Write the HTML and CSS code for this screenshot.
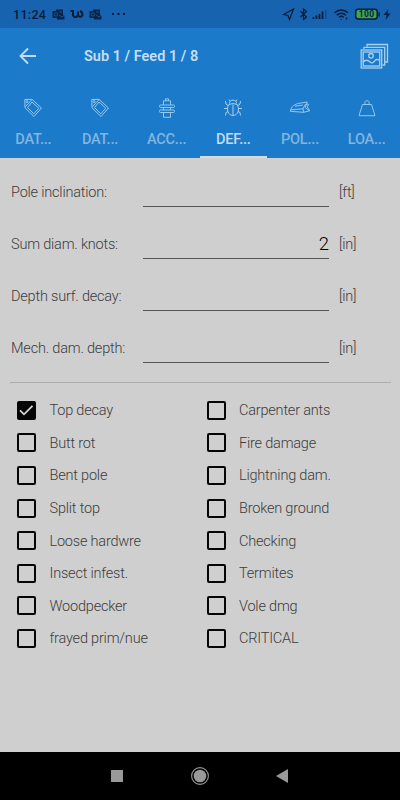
FILE: index.html
```html
<!DOCTYPE html>
<html lang="en">
<head>
<meta charset="utf-8">
<title>Sub 1 / Feed 1 / 8</title>
<link rel="stylesheet" href="styles.css">
</head>
<body>
<svg class="defs" aria-hidden="true">
  <symbol id="tag" viewBox="0 0 20 20"><path d="M1.800 1.500 9 1.300 18.500 10 11 18.500 2 9.800Z M9 4 15.800 10.200 10.800 15.800 4.500 9.500Z M2.500 8.500 8.600 2"/><circle cx="4" cy="3.600" r="1"/></symbol>
  <symbol id="mail" viewBox="0 0 13 11"><path class="solid" d="M4 .5h7v5l1.500 1v4H5V9H.5V2H4Z"/><circle class="cut" cx="4" cy="5.500" r="1.700"/><path class="cut" d="M7 6l2.800 2L13 5.800M7 3h3"/></symbol>
</svg>
<div class="screen">
  <div class="status">
    <span class="clock">11:24</span>
    <svg class="mail" width="13" height="11"><use href="#mail"/></svg>
    <svg class="wave" width="14" height="10" viewBox="0 0 14 10"><path d="M.5 2H3v3.500C3 9 8 9 8 5V2.500 5c0 4 4.700 3.500 4.500.3C12.400 3.500 11.500 2.500 10 2"/></svg>
    <svg class="mail" width="13" height="11"><use href="#mail"/></svg>
    <svg class="dots" width="15" height="4" viewBox="0 0 15 4"><path d="M1 1h2v2H1zM6.500 1h2v2h-2zM12 1h2v2h-2z"/></svg>
    <svg class="system" width="110" height="18" viewBox="0 0 110 18">
      <path d="M1.500 9.500 11.500 4 7.500 14.500 6 10.500Z"/>
      <path d="M18.500 6.200 24.500 12 21.500 14.500V4L24.500 6.500 18.500 12"/>
      <path class="bars" d="M31.500 14v-2M34.500 14v-3.500M37.500 14V9M40.500 14V6.500"/><path class="faint" d="M43.800 14V4.500"/>
      <path class="wifi" d="M52.500 7.700c4-3.600 9.500-3.600 13.500 0M54.700 10.100c3-2.400 6.200-2.400 9.200 0M57 12.300c1.500-1.300 3.200-1.300 4.700 0M59.300 14v.8M64.500 12.500v2"/>
      <rect class="battery" x="73.700" y="4.300" width="21.500" height="9.800" rx="2.500"/><path class="tip" d="M97.200 7.500v4"/>
      <text x="84.600" y="12.200">100</text>
      <path class="solid" d="M106.500 4 101.500 10h3l-1 5 5.200-6.500h-3.200Z"/>
    </svg>
  </div>
  <header>
    <div class="titlebar">
      <svg class="back" width="18" height="18" viewBox="0 0 18 18"><path d="M17 9H2M9 1.500 1.500 9 9 16.500"/></svg>
      <h1>Sub 1 / Feed 1 / 8</h1>
      <svg class="gallery" width="30" height="28" viewBox="0 0 30 28"><path d="M7 3.500V1.500H27.500V19H25M4 6V4.300H24.700V22H22.500"/><rect x="1.200" y="7" width="20.500" height="18"/><rect class="frame" x="3.200" y="9" width="16.500" height="14"/><circle cx="11" cy="12.800" r="2.300"/><path d="M3 19c3-3 5-2 7 0s4 0 5-1.300 3-1.500 5-.5"/></svg>
    </div>
    <nav>
      <a class="tab"><svg viewBox="0 0 20 20"><use href="#tag"/></svg><span>DAT...</span></a>
      <a class="tab"><svg viewBox="0 0 20 20"><use href="#tag"/></svg><span>DAT...</span></a>
      <a class="tab"><svg viewBox="0 0 20 20"><path d="M8.500 2.500V.8h3v1.700M6.500 7V2.800h7V7M6.500 9.500V12M13.500 9.500V12M6.500 14.500v4.800h7v-4.800"/><rect x="2.500" y="7" width="15" height="2.500" rx="1"/><rect x="2.500" y="12" width="15" height="2.500" rx="1"/></svg><span>ACC...</span></a>
      <a class="tab active"><svg viewBox="0 0 20 20"><path d="M6.500 5.500C6 1 14 1 13.500 5.500M10 6.500v11M5.800 6.500Q10 4.500 14.200 6.500M5.800 6.500C3 11 5 17.500 10 17.500S17 11 14.200 6.500M7 3 6 1.500M13 3 14 1.500M5 7.500 3 6 2.500 3M15 7.500 17 6 17.500 3M4.500 10.500H1M15.500 10.500H19M5 13.500 3 14.500 2.500 17.500M15 13.500 17 14.500 17.500 17.500"/></svg><span>DEF...</span></a>
      <a class="tab"><svg viewBox="0 0 20 20"><path d="M.3 13.300C1 8.500 5 6 9 5.300L17.300 4 16.500 6l2 .3-1.200 2.500 2.400 4-6.200 1.500ZM1 11.800 13 10.800 15.500 6M5 8.200 13 7M13 10.800l.5 3.500M16.500 6l-1.200 3.500 3.500 3"/></svg><span>POL...</span></a>
      <a class="tab"><svg viewBox="0 0 20 20"><path d="M5.500 6.500h9L18 17.700H2ZM8.200 6.300C6 1.500 14 1.500 11.800 6.300"/></svg><span>LOA...</span></a>
    </nav>
  </header>
  <main>
    <form>
      <div class="field"><label>Pole inclination:</label><div class="value"></div><span>[ft]</span></div>
      <div class="field"><label>Sum diam. knots:</label><div class="value">2</div><span>[in]</span></div>
      <div class="field"><label>Depth surf. decay:</label><div class="value"></div><span>[in]</span></div>
      <div class="field"><label>Mech. dam. depth:</label><div class="value"></div><span>[in]</span></div>
    </form>
    <div class="checks">
      <div class="check"><i class="box on"><svg viewBox="0 0 18 18"><path d="M3 9.300 7 13.300 15.500 4.800"/></svg></i><span>Top decay</span></div>
      <div class="check"><i class="box"></i><span>Carpenter ants</span></div>
      <div class="check"><i class="box"></i><span>Butt rot</span></div>
      <div class="check"><i class="box"></i><span>Fire damage</span></div>
      <div class="check"><i class="box"></i><span>Bent pole</span></div>
      <div class="check"><i class="box"></i><span>Lightning dam.</span></div>
      <div class="check"><i class="box"></i><span>Split top</span></div>
      <div class="check"><i class="box"></i><span>Broken ground</span></div>
      <div class="check"><i class="box"></i><span>Loose hardwre</span></div>
      <div class="check"><i class="box"></i><span>Checking</span></div>
      <div class="check"><i class="box"></i><span>Insect infest.</span></div>
      <div class="check"><i class="box"></i><span>Termites</span></div>
      <div class="check"><i class="box"></i><span>Woodpecker</span></div>
      <div class="check"><i class="box"></i><span>Vole dmg</span></div>
      <div class="check"><i class="box"></i><span>frayed prim/nue</span></div>
      <div class="check"><i class="box"></i><span>CRITICAL</span></div>
    </div>
  </main>
  <footer>
    <svg width="20" height="20" viewBox="0 0 20 20"><path d="M4 4h12v12H4z"/></svg>
    <svg width="20" height="20" viewBox="0 0 20 20"><circle cx="10" cy="10" r="6.300"/><circle class="ring" cx="10" cy="10" r="8.400"/></svg>
    <svg width="20" height="20" viewBox="0 0 20 20"><path d="M3 10 15 3v14Z"/></svg>
  </footer>
</div>
</body>
</html>
```
FILE: styles.css
```css
* { box-sizing: border-box; }
body { margin: 0; font-family: Roboto, sans-serif; }
svg { display: block; fill: none; }
.defs { display: none; }
.screen { width: 400px; height: 800px; display: flex; flex-direction: column; background: #cfcfcf; overflow: hidden; }

.status { height: 28px; background: #1763b0; display: flex; align-items: center; padding: 0 8px 0 13px; color: #061c3a; }
.clock { font-size: 12.500px; font-weight: 500; letter-spacing: .3px; width: 39px; }
.status svg { stroke: #061c3a; flex: none; }
.status .mail { stroke: #1763b0; }
.solid { fill: #082448; stroke: none; }
.cut { stroke-width: .8; }
.status .wave { margin: 0 5px; stroke-width: 2; }
.status .dots { margin-left: 9px; fill: #061c3a; stroke: none; }
.status .system { margin-left: auto; stroke-width: 1.200; }
.bars { stroke-width: 1.700; }
.faint { stroke: #104d90; stroke-width: 1.500; }
.wifi { stroke-width: 1.500; }
.battery { fill: #42a44c; stroke-width: 1.500; }
.tip { stroke-width: 1.500; }
.system text { font: 700 8.500px Roboto, sans-serif; fill: #082448; stroke: none; text-anchor: middle; letter-spacing: .4px; }

header { height: 130px; background: #1b7bca; flex: none; }
.titlebar { height: 56px; display: flex; align-items: center; padding: 0 10px 0 19px; }
.back { stroke: #c3dcf1; stroke-width: 1.800; }
h1 { margin: 2px 0 0 47px; font-size: 14.500px; font-weight: 600; line-height: 20px; color: #c5def3; flex: 1; }
.gallery { stroke: #a9cfee; stroke-width: 1.300; margin-top: 2px; }
nav { display: grid; grid-template-columns: repeat(6, 1fr); height: 74px; }
.tab { display: flex; flex-direction: column; align-items: center; padding-top: 14px; color: #82b5df; border-bottom: 2px solid transparent; }
.tab svg { width: 20px; height: 20px; stroke: #98c7ec; stroke-width: 1; }
.tab span { margin-top: 12px; font-size: 14.500px; font-weight: 500; line-height: 20px; letter-spacing: -.2px; }
.tab.active { color: #c2dcf2; border-bottom-color: #d2dce5; }
.tab.active svg { stroke: #a8d0f0; }

main { flex: 1; }
form { height: 225px; margin: 0 9px 0 10px; padding-top: 8px; border-bottom: 1px solid #adadad; }
.field { height: 52.100px; display: grid; grid-template-columns: 132px 186px 1fr; align-items: center; padding-left: 1px; font-size: 14.500px; font-weight: 350; letter-spacing: -.2px; color: #3c3c3c; }
.field label, .field span { padding-top: 1px; }
.value { height: 30px; border-bottom: 1px solid #555; text-align: right; font-size: 18.500px; font-weight: 350; letter-spacing: 0; line-height: 31px; color: #000; }
.field span { padding-left: 10px; }
.checks { display: grid; grid-template-columns: 189.500px 1fr; grid-auto-rows: 32.600px; padding: 11px 0 0 17px; }
.check { display: flex; align-items: center; gap: 13.500px; font-size: 14.500px; font-weight: 350; letter-spacing: -.2px; color: #3c3c3c; }
.check span { padding-top: 1px; }
.box { width: 19px; height: 19px; border: 2px solid #050505; border-radius: 2px; flex: none; }
.box.on { background: #050505; border: 0; }
.box svg { width: 18px; height: 18px; stroke: #d4d4d4; stroke-width: 1.800; }

footer { height: 48px; flex: none; background: #000; display: flex; align-items: center; justify-content: center; gap: 63px; }
footer svg { fill: #999; }
footer .ring { fill: none; stroke: #999; stroke-width: 1.100; }
```
